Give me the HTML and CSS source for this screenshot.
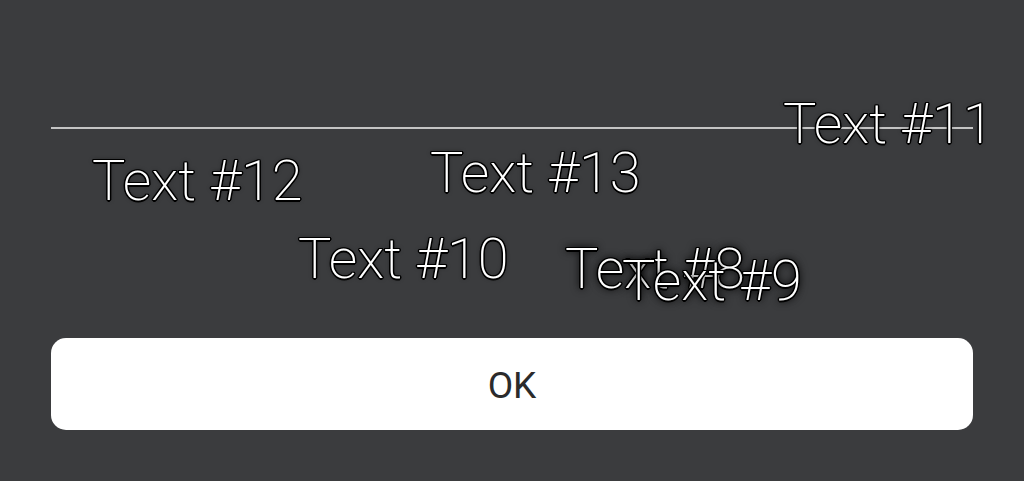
FILE: index.html
```html
<!DOCTYPE html>
<html>
<head>
<meta charset="utf-8">
<link rel="stylesheet" href="styles.css">
</head>
<body>
<div class="dialog">
  <div class="divider"></div>
  <div class="canvas">
    <span class="label l11">Text #11</span>
    <span class="label l12">Text #12</span>
    <span class="label l13">Text #13</span>
    <span class="label l10">Text #10</span>
    <span class="label glow l8">Text #8</span>
    <span class="label glow l9">Text #9</span>
  </div>
  <button class="ok">OK</button>
</div>
</body>
</html>
```
FILE: styles.css
```css
html, body {
  margin: 0;
  padding: 0;
  background: #3b3c3e;
  width: 1024px;
  height: 481px;
  overflow: hidden;
}
.dialog {
  position: relative;
  padding: 127px 51px 0 51px;
  display: flex;
  flex-direction: column;
}
.divider {
  height: 2px;
  background: #c4c4c4;
}
.canvas {
  height: 209px;
}
.ok {
  height: 92px;
  border: none;
  border-radius: 15px;
  background: #ffffff;
  color: #2b2b2b;
  font-family: Roboto, "Liberation Sans", sans-serif;
  font-size: 37px;
  font-weight: 400;
  padding: 2px 0 0 0;
  width: 100%;
}
.label {
  position: absolute;
  font-family: Roboto, "Liberation Sans", sans-serif;
  font-weight: 200;
  font-size: 56px;
  line-height: 1;
  color: #ffffff;
  white-space: nowrap;
  text-shadow:
    1.5px 0 0 #000, -1.5px 0 0 #000, 0 1.5px 0 #000, 0 -1.5px 0 #000,
    1px 1px 0 #000, -1px -1px 0 #000, 1px -1px 0 #000, -1px 1px 0 #000,
    0 0 4px rgba(0,0,0,0.6);
}
.glow {
  text-shadow:
    1.5px 0 0 #000, -1.5px 0 0 #000, 0 1.5px 0 #000, 0 -1.5px 0 #000,
    1px 1px 0 #000, -1px -1px 0 #000, 1px -1px 0 #000, -1px 1px 0 #000,
    0 0 6px #000, 0 0 10px #000;
}
.l11 { left: 783px; top: 96px; }
.l12 { left: 92px; top: 153px; }
.l13 { left: 430px; top: 145px; }
.l10 { left: 298px; top: 231px; }
.l8 { left: 565px; top: 241px; }
.l9 { left: 622px; top: 253px; }
```
